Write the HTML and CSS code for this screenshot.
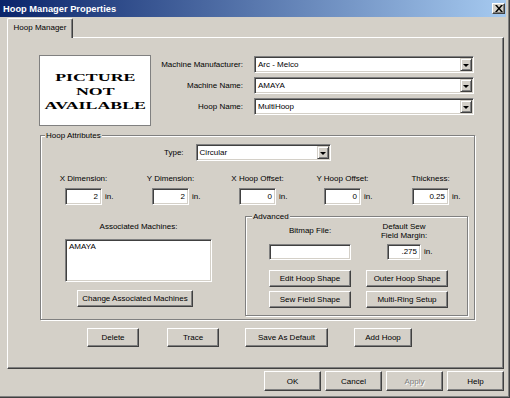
FILE: index.html
```html
<!DOCTYPE html>
<html lang="en">
<head>
  <meta charset="UTF-8">
  <title>Hoop Manager Properties</title>
  <link rel="stylesheet" href="styles.css">
</head>
<body>

  <div class="window">
    <div class="titlebar">
      <span class="title">Hoop Manager Properties</span>
      <span class="close-btn">
        <svg width="8" height="7" viewBox="0 0 8 7"><path d="M0 0H2L4 2.4L6 0H8L5 3.5L8 7H6L4 4.6L2 7H0L3 3.5Z" fill="#000"/></svg>
      </span>
    </div>

    <div class="tabs">
      <div class="tab">Hoop Manager</div>
    </div>

    <div class="panel">
      <div class="top-row">
        <div class="picture">
          <div class="picture-text">PICTURE<br>NOT<br>AVAILABLE</div>
        </div>
        <div class="machine-grid">
          <label>Machine Manufacturer:</label>
          <div class="combo"><span class="combo-value">Arc - Melco</span><span class="drop"></span></div>
          <label>Machine Name:</label>
          <div class="combo"><span class="combo-value">AMAYA</span><span class="drop"></span></div>
          <label>Hoop Name:</label>
          <div class="combo"><span class="combo-value">MultiHoop</span><span class="drop"></span></div>
        </div>
      </div>

      <fieldset class="group hoop-attrs">
        <legend>Hoop Attributes</legend>

        <div class="type-row">
          <label class="type-label">Type:</label>
          <div class="combo type-combo"><span class="combo-value">Circular</span><span class="drop"></span></div>
        </div>

        <div class="dims">
          <div class="dim">
            <div class="dim-label">X Dimension:</div>
            <div class="dim-field"><span class="edit num">2</span><span class="unit">in.</span></div>
          </div>
          <div class="dim">
            <div class="dim-label">Y Dimension:</div>
            <div class="dim-field"><span class="edit num">2</span><span class="unit">in.</span></div>
          </div>
          <div class="dim">
            <div class="dim-label">X Hoop Offset:</div>
            <div class="dim-field"><span class="edit num">0</span><span class="unit">in.</span></div>
          </div>
          <div class="dim">
            <div class="dim-label">Y Hoop Offset:</div>
            <div class="dim-field"><span class="edit num">0</span><span class="unit">in.</span></div>
          </div>
          <div class="dim">
            <div class="dim-label">Thickness:</div>
            <div class="dim-field"><span class="edit num">0.25</span><span class="unit">in.</span></div>
          </div>
        </div>

        <div class="lower">
          <div class="assoc">
            <div class="assoc-label">Associated Machines:</div>
            <div class="listbox">AMAYA</div>
            <button class="btn assoc-btn">Change Associated Machines</button>
          </div>

          <fieldset class="group advanced">
            <legend>Advanced</legend>
            <div class="adv-row adv-labels">
              <div class="adv-cell bitmap-label">Bitmap File:</div>
              <div class="adv-cell margin-label">Default Sew<br>Field Margin:</div>
            </div>
            <div class="adv-row adv-inputs">
              <span class="edit bitmap-edit"></span>
              <div class="margin-field"><span class="edit num margin-edit">.275</span><span class="unit">in.</span></div>
            </div>
            <div class="adv-row adv-buttons">
              <button class="btn">Edit Hoop Shape</button>
              <button class="btn">Outer Hoop Shape</button>
            </div>
            <div class="adv-row adv-buttons second">
              <button class="btn">Sew Field Shape</button>
              <button class="btn">Multi-Ring Setup</button>
            </div>
          </fieldset>
        </div>
      </fieldset>

      <div class="action-row">
        <button class="btn btn-delete">Delete</button>
        <button class="btn btn-trace">Trace</button>
        <button class="btn btn-default">Save As Default</button>
        <button class="btn btn-add">Add Hoop</button>
      </div>
    </div>

    <div class="dialog-buttons">
      <button class="btn">OK</button>
      <button class="btn">Cancel</button>
      <button class="btn disabled">Apply</button>
      <button class="btn">Help</button>
    </div>
  </div>

</body>
</html>
```

FILE: styles.css
```css
* {
  box-sizing: border-box;
}

body {
  margin: 0;
  padding: 0;
  background-color: #d4d0c8;
  font-family: 'Liberation Sans', Arial, sans-serif;
  font-size: 8px;
  line-height: 10px;
  color: #000;
}

.window {
  width: 510px;
  height: 398px;
  background-color: #d4d0c8;
  box-shadow: inset -1px -1px #404040, inset -2px -2px #808080;
  overflow: hidden;
}

/* title bar */
.titlebar {
  display: flex;
  align-items: center;
  height: 17px;
  margin-right: 4px;
  padding-left: 3px;
  background: linear-gradient(to right, #0a246a, #a6caf0);
}

.title {
  color: #fff;
  font-weight: bold;
  font-size: 9.3px;
}

.close-btn {
  display: flex;
  align-items: center;
  justify-content: center;
  width: 13px;
  height: 11px;
  margin-left: auto;
  margin-right: 1px;
  background: #d4d0c8;
  border: 1px solid;
  border-color: #fff #404040 #404040 #fff;
  box-shadow: inset -1px -1px #808080;
}

/* tab */
.tabs {
  margin-top: 1px;
  padding-left: 7px;
  height: 20px;
}

.tab {
  position: relative;
  z-index: 1;
  width: 66px;
  height: 20px;
  padding-top: 4px;
  text-align: center;
  background: #d4d0c8;
  border-top: 1px solid #fff;
  border-left: 1px solid #fff;
  border-right: 1px solid #404040;
  box-shadow: inset -1px 0 #808080;
  border-radius: 2px 2px 0 0;
}

.panel {
  width: 497px;
  height: 332px;
  margin-top: -1px;
  margin-left: 7px;
  border: 1px solid;
  border-color: #fff #404040 #404040 #fff;
  box-shadow: inset -1px -1px #808080;
}

/* top row */
.top-row {
  display: flex;
  margin-top: 17px;
  margin-left: 31px;
}

.picture {
  display: flex;
  align-items: center;
  justify-content: center;
  width: 112px;
  height: 71px;
  background: #fff;
  border: 1px solid #808080;
}

.picture-text {
  font-family: 'Liberation Serif', 'Times New Roman', serif;
  font-weight: bold;
  font-size: 11px;
  line-height: 14px;
  text-align: center;
  transform: scaleX(1.62);
}

.machine-grid {
  display: grid;
  grid-template-columns: 92px 220px;
  column-gap: 11px;
  row-gap: 4px;
  align-content: start;
  margin-top: 1px;
}

.machine-grid label {
  align-self: center;
  text-align: right;
  white-space: nowrap;
}

/* sunken controls */
.combo,
.edit,
.listbox {
  background: #fff;
  border: 1px solid;
  border-color: #808080 #fff #fff #808080;
  box-shadow: inset 1px 1px #404040, inset -1px -1px #d4d0c8;
}

.combo {
  display: flex;
  height: 17px;
  padding: 1px;
}

.combo-value {
  padding-left: 2px;
  line-height: 13px;
}

.drop {
  display: flex;
  align-items: center;
  justify-content: center;
  width: 12px;
  height: 13px;
  margin-left: auto;
  background: #d4d0c8;
  border: 1px solid;
  border-color: #d4d0c8 #404040 #404040 #d4d0c8;
  box-shadow: inset 1px 1px #fff, inset -1px -1px #808080;
}

.drop::after {
  content: "";
  border-top: 3px solid #000;
  border-left: 3px solid transparent;
  border-right: 3px solid transparent;
  margin-top: 1px;
}

.edit {
  display: block;
  height: 17px;
  padding: 0 3px;
  line-height: 15px;
}

.num {
  text-align: right;
}

.unit {
  margin-left: 3px;
  line-height: 17px;
}

/* group boxes */
.group {
  margin: 0;
  padding: 0;
  min-width: 0;
  border: 1px solid #808080;
  box-shadow: inset 1px 1px #fff, 1px 1px #fff;
}

.group legend {
  padding: 0 1px;
  line-height: 11px;
  background: #d4d0c8;
}

.hoop-attrs {
  width: 435px;
  margin-top: 4px;
  margin-left: 32px;
  padding-bottom: 3px;
}

.hoop-attrs > legend {
  margin-left: 4px;
}

.type-row {
  display: flex;
  align-items: center;
  margin-top: 3px;
  margin-left: 123px;
}

.type-label {
  margin-right: 12px;
}

.type-combo {
  width: 135px;
}

.dims {
  display: grid;
  grid-template-columns: 87px 87px 85px 88px auto;
  margin-top: 13px;
  padding-left: 24px;
}

.dim-label {
  width: 37px;
  margin: 0 -30px;
  width: 97px;
  text-align: center;
  white-space: nowrap;
}

.dim-field {
  display: flex;
  margin-top: 4px;
}

.dim-field .edit {
  width: 37px;
}

.lower {
  display: flex;
  margin-top: 6px;
}

.assoc {
  width: 147px;
  margin-left: 24px;
}

.assoc-label {
  margin-top: 11px;
  text-align: center;
}

.listbox {
  height: 43px;
  margin-top: 7px;
  padding: 2px 3px;
}

.assoc-btn {
  width: 116px;
  height: 17px;
  margin-top: 8px;
  margin-left: 12px;
}

.advanced {
  width: 223px;
  height: 105px;
  margin-left: 33px;
}

.advanced > legend {
  margin-left: 6px;
}

.adv-row {
  display: grid;
  grid-template-columns: 82px 82px;
  column-gap: 15px;
  padding-left: 23px;
}

.adv-labels {
  height: 18px;
}

.bitmap-label {
  align-self: center;
  text-align: center;
}

.margin-label {
  width: 80px;
  margin-left: -2px;
  line-height: 9px;
  text-align: center;
}

.adv-inputs {
  margin-top: 4px;
}

.bitmap-edit {
  height: 16px;
}

.margin-field {
  display: flex;
  padding-left: 21px;
}

.margin-edit {
  width: 34px;
  height: 16px;
  line-height: 14px;
}

.margin-field .unit {
  line-height: 16px;
}

.adv-buttons {
  margin-top: 10px;
}

.adv-buttons.second {
  margin-top: 4px;
}

.adv-buttons .btn {
  height: 17px;
}

/* buttons */
.btn {
  padding: 0;
  font-family: 'Liberation Sans', Arial, sans-serif;
  font-size: 8px;
  color: #000;
  background: #d4d0c8;
  border: 1px solid;
  border-color: #fff #404040 #404040 #fff;
  box-shadow: inset -1px -1px #808080;
  border-radius: 0;
  white-space: nowrap;
}

.btn.disabled {
  color: #808080;
  text-shadow: 1px 1px #fff;
}

.action-row {
  display: flex;
  margin-top: 8px;
  margin-left: 79px;
}

.action-row .btn {
  height: 19px;
}

.btn-delete {
  width: 52px;
}

.btn-trace {
  width: 52px;
  margin-left: 28px;
}

.btn-default {
  width: 83px;
  margin-left: 26px;
}

.btn-add {
  width: 58px;
  margin-left: 26px;
}

.dialog-buttons {
  display: flex;
  justify-content: flex-end;
  gap: 4px;
  margin-top: 2px;
  padding-right: 6px;
}

.dialog-buttons .btn {
  width: 57px;
  height: 20px;
}
```
